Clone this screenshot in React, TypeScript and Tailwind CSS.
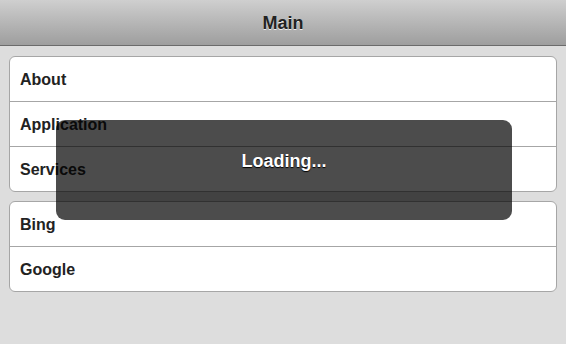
import React from "react";

const font = { fontFamily: '"Liberation Sans", Arial, sans-serif' };

const ListGroup = ({ items, className }: { items: string[]; className?: string }) => (
  <ul className={`mx-[9px] rounded-[6px] border border-[#a6a6a6] bg-white ${className ?? ""}`}>
    {items.map((item, i) => (
      <li
        key={item}
        className={`flex items-center pl-[10px] pt-[2px] text-[16px] font-bold text-[#222] [text-shadow:0_1px_0_#fff] ${
          i > 0 ? "h-[45px] border-t border-[#a6a6a6]" : "h-[44px]"
        }`}
      >
        {item}
      </li>
    ))}
  </ul>
);

const App = () => {
  return (
    <div className="relative h-[344px] w-[566px] overflow-hidden bg-[#dddddd]" style={font}>
      <header className="flex h-[46px] items-center justify-center border-b border-[#6b6b6b] bg-gradient-to-b from-[#cfcfcf] to-[#9e9e9e] pt-[2px]">
        <h1 className="text-[18px] font-bold text-[#222] [text-shadow:0_1px_0_#eee]">Main</h1>
      </header>

      <ListGroup className="mt-[10px]" items={["About", "Application", "Services"]} />
      <ListGroup className="mt-[9px]" items={["Bing", "Google"]} />

      <div className="absolute left-[56px] top-[120px] flex h-[100px] w-[456px] justify-center rounded-[9px] bg-black/70 pt-[28px]">
        <span className="text-[18px] font-bold text-white [text-shadow:0_1px_1px_#000]">Loading...</span>
      </div>
    </div>
  );
};

export default App;
